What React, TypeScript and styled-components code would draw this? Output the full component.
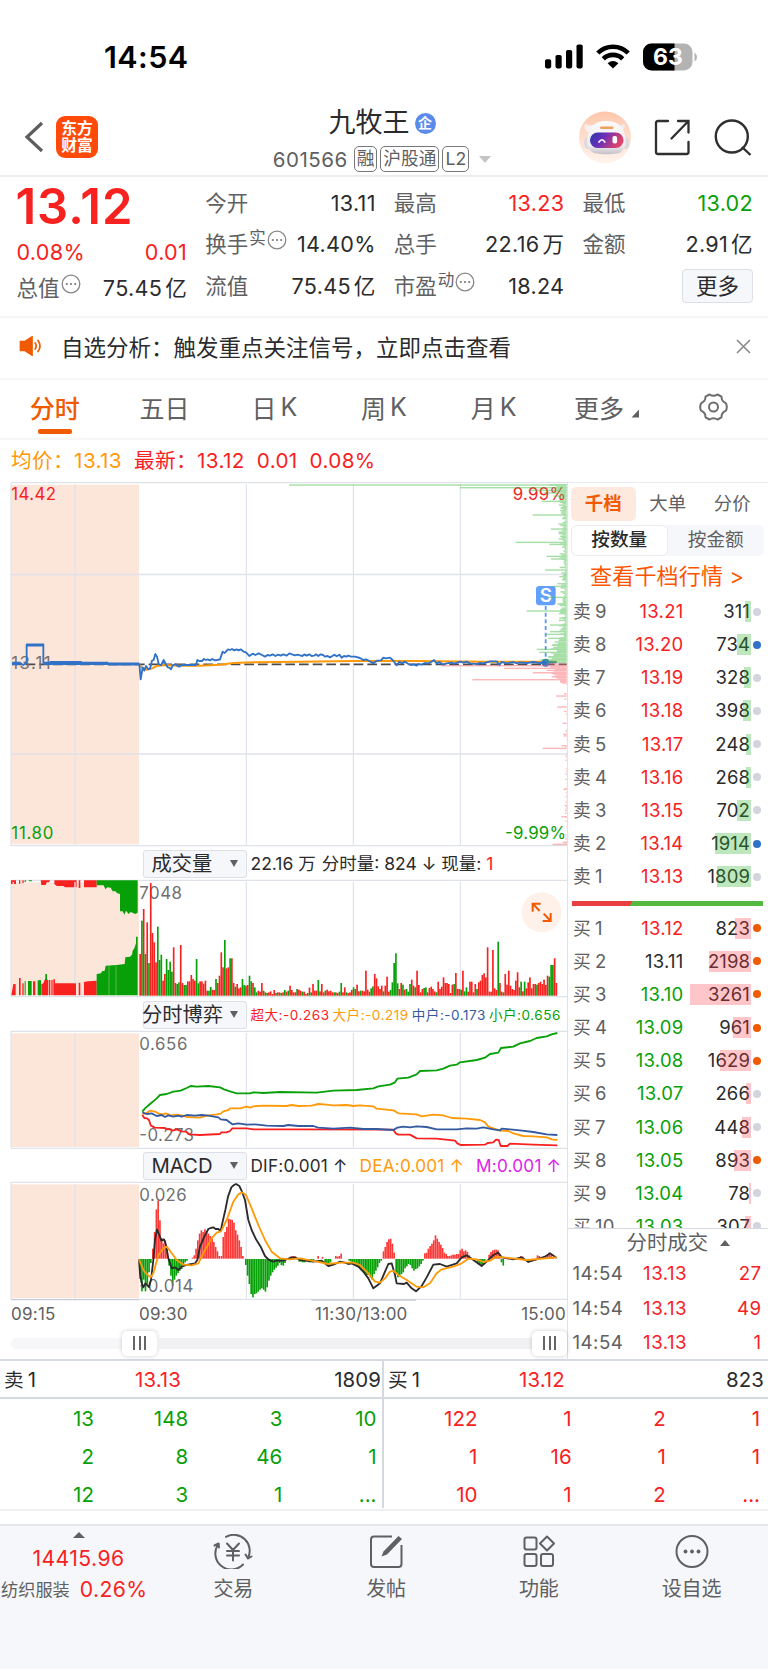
import React from 'react';
import styled, { createGlobalStyle } from 'styled-components';

const RED = '#f7221f';
const GREEN = '#08a008';
const INK = '#2b2b2d';
const GREY = '#606062';
const ORANGE = '#f05a00';
const AMBER = '#ff9a0a';
const LINE = '#dfe2e9';
const FONT = "Inter, 'Noto Sans CJK SC', sans-serif";

const GlobalStyle = createGlobalStyle`
  * { box-sizing: border-box; }
  body { margin: 0; background: #fff; font-family: ${FONT}; color: ${INK}; font-weight: 400; }
  svg { display: block; flex: none; }
  svg text { font-family: ${FONT}; }
`;

const Screen = styled.div`
  width: 768px;
  height: 1669px;
  display: flex;
  flex-direction: column;
  overflow: hidden;
  white-space: nowrap;
`;

/* ---------- status bar & header ---------- */

const StatusBar = styled.div`
  height: 106px;
  padding: 7px 71px 0 104px;
  display: flex;
  align-items: center;
  justify-content: space-between;
`;
const Clock = styled.div`
  font-size: 30.5px;
  font-weight: 600;
  color: #000;
  letter-spacing: 0.4px;
`;
const StatusIcons = styled.div`
  display: flex;
  align-items: center;
  gap: 13px;
`;
const Header = styled.header`
  height: 71px;
  border-bottom: 2px solid #ececec;
  display: grid;
  grid-template-columns: 248px 1fr 248px;
  padding: 0 16px 0 24px;
`;
const HeaderSide = styled.div<{ $end?: boolean }>`
  display: flex;
  align-items: center;
  justify-content: ${(p) => (p.$end ? 'flex-end' : 'flex-start')};
  gap: ${(p) => (p.$end ? '23px' : '12px')};
  margin-top: -8px;
`;
const Logo = styled.div`
  width: 42px;
  height: 42px;
  border-radius: 9px;
  background: #ff4a0a;
  color: #fff;
  font-size: 15.8px;
  line-height: 17px;
  font-weight: 600;
  padding-top: 4px;
  text-align: center;
  white-space: normal;
`;
const TitleBlock = styled.div`
  display: flex;
  flex-direction: column;
  align-items: center;
  margin-right: 12px;
`;
const Title = styled.div`
  height: 34px;
  display: flex;
  align-items: center;
  gap: 5px;
  font-size: 27px;
  line-height: 34px;
`;
const Enterprise = styled.span`
  width: 21px;
  height: 21px;
  border-radius: 50%;
  background: #5b8be8;
  color: #fff;
  font-size: 14px;
  font-weight: 700;
  line-height: 20px;
  text-align: center;
`;
const SubTitle = styled.div`
  display: flex;
  align-items: center;
  gap: 3px;
  height: 36px;
  padding-top: 2px;
  color: ${GREY};
`;
const Code = styled.span`
  margin-right: 3px;
  font-size: 20.5px;
  letter-spacing: 0.5px;
`;
const Tag = styled.span`
  height: 26px;
  border: 1.5px solid #77777a;
  border-radius: 5px;
  padding: 0 2px;
  font-size: 17.7px;
  line-height: 23px;
`;
const SubCaret = styled.span`
  display: flex;
  margin-left: 7px;
`;
const Caret = styled.span<{ $color: string; $up?: boolean; $w: number; $h: number }>`
  width: 0;
  height: 0;
  border-left: ${(p) => p.$w / 2}px solid transparent;
  border-right: ${(p) => p.$w / 2}px solid transparent;
  border-${(p) => (p.$up ? 'bottom' : 'top')}: ${(p) => p.$h}px solid ${(p) => p.$color};
`;

/* ---------- quote ---------- */

const Quote = styled.section`
  height: 141px;
  padding: 5px 15px 0 16.5px;
  border-bottom: 2px solid #f5f5f6;
  display: grid;
  grid-template-columns: repeat(4, 1fr);
  column-gap: 18px;
  align-items: start;
`;
const QuoteColumn = styled.div`
  display: flex;
  flex-direction: column;
`;
const Cell = styled.div<{ $h?: number }>`
  height: ${(p) => p.$h ?? 41.6}px;
  display: flex;
  align-items: center;
  justify-content: space-between;
`;
const BigPrice = styled.div`
  height: 49px;
  line-height: 49px;
  font-size: 49px;
  font-weight: 600;
  color: ${RED};
  letter-spacing: 0.9px;
  margin-left: -1px;
`;
const Label = styled.span`
  display: flex;
  align-items: center;
  font-size: 21.5px;
  line-height: 26px;
  color: ${GREY};
`;
const Sup = styled.span`
  font-size: 16.5px;
  margin: -12px 0 0 1px;
`;
const Value = styled.span<{ $color?: string }>`
  font-size: 21.6px;
  line-height: 26px;
  letter-spacing: 0.3px;
  color: ${(p) => p.$color ?? INK};
`;
const Unit = styled.span`
  margin-left: 3px;
`;
const InfoWrap = styled.span`
  margin: -8px 0 0 1px;
`;
const MoreButton = styled.button`
  margin-left: auto;
  width: 71px;
  height: 34px;
  border: 1.5px solid #dcdfe5;
  border-radius: 4px;
  background: #f6f7fa;
  font-family: inherit;
  font-size: 21.5px;
  line-height: 30px;
  padding: 0;
  color: ${INK};
`;

/* ---------- notice & tabs ---------- */

const Notice = styled.div`
  height: 61.5px;
  padding: 0 17px 3px 19px;
  border-bottom: 2px solid #f6f6f7;
  display: flex;
  align-items: center;
`;
const NoticeText = styled.div`
  flex: 1;
  margin-left: 18px;
  font-size: 22.5px;
`;
const TabBar = styled.nav`
  height: 60.5px;
  border-bottom: 2px solid #f6f6f7;
  display: grid;
  grid-template-columns: repeat(7, 1fr);
`;
const Tab = styled.div<{ $active?: boolean; $shift?: number }>`
  display: flex;
  align-items: center;
  justify-content: center;
  position: relative;
  padding-bottom: 3px;
  padding-left: ${(p) => p.$shift ?? 0}px;
  gap: 4px;
  font-size: 25px;
  font-weight: ${(p) => (p.$active ? 500 : 400)};
  color: ${(p) => (p.$active ? ORANGE : GREY)};
  &::after {
    content: '';
    display: ${(p) => (p.$active ? 'block' : 'none')};
    position: absolute;
    bottom: 4px;
    width: 34px;
    height: 5px;
    border-radius: 2px;
    background: ${ORANGE};
  }
`;
const Legend = styled.div`
  height: 42px;
  padding: 0 0 1px 11px;
  display: flex;
  align-items: center;
  font-size: 20.7px;
  line-height: 26px;
  letter-spacing: 0.35px;
  color: ${RED};
`;
const LegendItem = styled.span<{ $color?: string; $gap: number }>`
  color: ${(p) => p.$color ?? RED};
  margin-right: ${(p) => p.$gap}px;
`;

/* ---------- body ---------- */

const Body = styled.main`
  height: 879px;
  display: grid;
  grid-template-columns: 568px 200px;
  border-bottom: 2px solid #d5d9e0;
`;
const Charts = styled.div`
  display: flex;
  flex-direction: column;
  border-right: 1px solid ${LINE};
`;
const IndicatorHead = styled.div`
  height: 31px;
  padding-left: 142.5px;
  display: flex;
  align-items: center;
  line-height: 24px;
`;
const Picker = styled.div`
  width: 104px;
  height: 28px;
  flex: none;
  margin-right: 4px;
  border: 1.5px solid #dcdfe5;
  border-radius: 3px;
  background: #f6f7fa;
  display: flex;
  align-items: center;
  justify-content: space-between;
  padding-right: 8px;
  font-size: 20.3px;
  line-height: 24px;
`;
const PickerText = styled.span<{ $wide?: boolean }>`
  flex: 1;
  padding-left: ${(p) => (p.$wide ? 0 : '8px')};
  margin-left: ${(p) => (p.$wide ? '-1.5px' : 0)};
`;
const Stat = styled.span<{ $color?: string; $size?: number; $gap?: number; $track?: number }>`
  color: ${(p) => p.$color ?? INK};
  font-size: ${(p) => p.$size ?? 17.5}px;
  letter-spacing: ${(p) => p.$track ?? 0}px;
  margin-right: ${(p) => p.$gap ?? 0}px;
`;
const TimeAxis = styled.div`
  height: 25px;
  padding: 0 1px 0 11px;
  display: grid;
  grid-template-columns: 128px 176px 1fr auto;
  align-items: center;
  font-size: 17px;
  letter-spacing: 0.25px;
  color: ${GREY};
`;
const SliderRow = styled.div`
  height: 34px;
  display: flex;
  align-items: center;
  padding-left: 11px;
`;
const Track = styled.div<{ $grow?: boolean }>`
  height: 11px;
  width: ${(p) => (p.$grow ? 'auto' : '111px')};
  flex: ${(p) => (p.$grow ? 1 : 'none')};
  background: ${(p) => (p.$grow ? '#f1f1f3' : '#f7f7f9')};
  border-radius: ${(p) => (p.$grow ? 0 : '6px 0 0 6px')};
`;
const Handle = styled.div`
  width: 35px;
  height: 25px;
  border-radius: 5px;
  background: #fff;
  box-shadow: 0 0 4px rgba(0, 0, 0, 0.2);
  display: flex;
  align-items: center;
  justify-content: center;
  gap: 3.5px;
`;
const Grip = styled.i`
  width: 2px;
  height: 14px;
  background: #666;
`;

/* ---------- order book ---------- */

const Side = styled.aside`
  height: 877px;
  display: flex;
  flex-direction: column;
`;
const BookTabs = styled.div`
  height: 43px;
  padding: 4px 0 4px 3px;
  border-top: 1px solid #e8ebf0;
  display: flex;
`;
const BookTab = styled.div<{ $active?: boolean }>`
  width: 64.5px;
  height: 34px;
  line-height: 32px;
  border-radius: 5px;
  text-align: center;
  font-size: 18.4px;
  font-weight: ${(p) => (p.$active ? 600 : 400)};
  color: ${(p) => (p.$active ? ORANGE : GREY)};
  background: ${(p) => (p.$active ? '#fee9df' : 'transparent')};
`;
const Segment = styled.div`
  margin: 0 4px 0 3px;
  height: 31px;
  border-radius: 6px;
  background: #f6f7fa;
  display: flex;
`;
const SegmentItem = styled.div<{ $active?: boolean }>`
  flex: 1;
  border: 1.5px solid ${(p) => (p.$active ? '#ebecef' : 'transparent')};
  border-radius: 6px;
  background: ${(p) => (p.$active ? '#fff' : 'transparent')};
  text-align: center;
  line-height: 28px;
  font-size: 18.7px;
  font-weight: ${(p) => (p.$active ? 500 : 400)};
  color: ${(p) => (p.$active ? INK : GREY)};
`;
const BookLink = styled.div`
  height: 39px;
  line-height: 40px;
  padding-left: 22px;
  font-size: 22px;
  letter-spacing: 0.2px;
  color: #ff5500;
`;
const Levels = styled.div<{ $h: number }>`
  height: ${(p) => p.$h}px;
  overflow: hidden;
  display: flex;
  flex-direction: column;
`;
const Level = styled.div`
  height: 33.15px;
  flex: none;
  padding: 0 7px 0 5px;
  display: grid;
  grid-template-columns: 38px 72.5px 66.5px 1fr;
  align-items: center;
  font-size: 18.5px;
  line-height: 21px;
  letter-spacing: 0.25px;
  color: ${GREY};
`;
const SideName = styled.span`
  display: flex;
  align-items: baseline;
  gap: 4px;
`;
const SideGlyph = styled.span`
  font-size: 0.96em;
`;
const Price = styled.span<{ $color: string; $start?: boolean }>`
  text-align: ${(p) => (p.$start ? 'left' : 'right')};
  color: ${(p) => p.$color};
`;
const Volume = styled.span`
  text-align: right;
  position: relative;
  letter-spacing: 0.1px;
  color: ${INK};
`;
const DepthBar = styled.i<{ $color: string }>`
  position: absolute;
  right: -0.5px;
  top: 0;
  height: 21px;
  background: ${(p) => p.$color};
`;
const Dot = styled.i<{ $color: string }>`
  width: 8px;
  height: 8px;
  border-radius: 50%;
  justify-self: end;
  background: ${(p) => p.$color};
`;
const RatioBar = styled.div`
  margin: 7px 5px 6px 4px;
  height: 5px;
  background: linear-gradient(120deg, #e8403f 31%, #55b93f 31.5%);
`;
const TradesHead = styled.div`
  height: 28px;
  border-top: 1.5px solid #d5d9e0;
  display: flex;
  align-items: center;
  gap: 12px;
  padding-left: 58.5px;
  font-size: 20.4px;
  line-height: 26px;
  color: ${GREY};
`;
const Trade = styled.div`
  height: 34.3px;
  padding: 1px 6.5px 0 4.5px;
  display: grid;
  grid-template-columns: 52px 62.5px 1fr;
  align-items: center;
  font-size: 18.7px;
  letter-spacing: 0.45px;
  color: ${GREY};
`;

/* ---------- queue ---------- */

const Queue = styled.section`
  height: 150px;
  border-bottom: 2px solid #eeeff2;
  display: grid;
  grid-template-columns: 384px 384px;
`;
const QueueHalf = styled.div<{ $left?: boolean }>`
  height: 147px;
  border-right: ${(p) => (p.$left ? `2px solid #d5d9e0` : 'none')};
`;
const QueueHead = styled.div<{ $left?: boolean }>`
  height: 37.5px;
  border-bottom: 2px solid #d5d9e0;
  padding: ${(p) => (p.$left ? '3px 1px 0 4px' : '3px 4px 0 4px')};
  display: grid;
  grid-template-columns: 131px 1fr auto;
  align-items: center;
  font-size: 20.4px;
  line-height: 26px;
  letter-spacing: 0.1px;
`;
const QueueRow = styled.div<{ $left?: boolean }>`
  height: 37.7px;
  padding-top: 4px;
  padding-right: ${(p) => (p.$left ? '5.5px' : '8px')};
  display: grid;
  grid-template-columns: repeat(4, 94.2px);
  justify-content: end;
  align-items: center;
  text-align: right;
  font-size: 20.5px;
  line-height: 26px;
  color: ${(p) => (p.$left ? GREEN : RED)};
`;

/* ---------- footer ---------- */

const Spacer = styled.div`
  height: 13px;
`;
const Footer = styled.footer`
  flex: 1;
  background: #f6f7fa;
  border-top: 2px solid #e6e8ec;
  display: grid;
  grid-template-columns: 157px repeat(4, 1fr);
  align-items: start;
`;
const IndexBox = styled.div`
  display: flex;
  flex-direction: column;
  align-items: center;
  color: ${RED};
  font-size: 21.2px;
  letter-spacing: 0.4px;
  padding-top: 6px;
`;
const IndexLine = styled.div<{ $sector?: boolean }>`
  height: 31px;
  line-height: 31px;
  margin-top: ${(p) => (p.$sector ? 0 : '5px')};
  display: flex;
  align-items: center;
  gap: 10px;
  align-self: ${(p) => (p.$sector ? 'flex-start' : 'center')};
  padding-left: ${(p) => (p.$sector ? '1px' : 0)};
`;
const Sector = styled.span`
  font-size: 17.2px;
  letter-spacing: 0;
  color: ${GREY};
`;
const Action = styled.div`
  display: flex;
  flex-direction: column;
  align-items: center;
  padding-top: 8px;
  color: ${GREY};
  font-size: 20px;
`;
const ActionLabel = styled.div`
  height: 30px;
  line-height: 30px;
  margin-top: 5px;
`;

/* ---------- data ---------- */

// Minute volume bars: height followed by r / g for up / down.
const volumeBars = `125r 225g 260r 125g 220r 98g 338r 188r 160r 100r 207g 107g 123g 45r 65r 110g 77g 102g 72g 145r
38r 35g 40g 152r 38r 32g 32g 43r 43r 62r 50r 45r 110g 37g 43r 43r 36r 45r 15r 15g 26g 18r 17r 50g 38r 60r 130r 85r
167g 82r 85r 112g 112r 38r 27g 35r 22r 25r 50g 32g 30r 32r 60g 43g 38r 25g 10g 15r 12r 38r 15g 10r 8g 10r 13r 5r 17r
8g 10r 10r 8g 10r 17g 12r 15g 30r 17r 10r 10r 20g 18r 15r 12g 12r 5r 8g 24r 10g 35r 15r 15r 47g 13r 35r 10r 15g 18r
13r 15r 10r 10g 10r 8r 12g 38g 10r 25r 10g 8r 10r 17r 25g 20g 33r 13r 15g 15r 13r 75r 18r 12r 22g 28g 65r 52r 28r 20r
30r 13g 30r 57r 12r 17g 40g 98g 127g 37g 20r 38r 33g 18r 20g 12g 35g 48r 30r 25g 75r 32r 10r 20r 23g 25g 10r 23r 27r
20r 13r 10g 42r 20r 27r 55r 38r 38r 35r 8r 33r 35g 68r 20r 20r 18g 75r 13g 25g 12r 42r 42r 10r 35r 20g 40r 45r 62r 67r
55r 145r 12r 12r 137r 22r 17r 162g 38r 12r 10g 65r 33r 75r 30r 20r 17r 45r 70r 25r 42g 13r 42g 22r 40r 55r 22r 35r 35r
33g 38r 42r 35r 48r 32r 60r 57g 92g 92g 112r 38r`
  .split(/\s+/)
  .map((s) => ({ h: parseInt(s, 10), up: s.endsWith('r') }));
const BAR_STEP = 1254 / volumeBars.length;

// Each run is a start x followed by consecutive histogram heights.
const macdRuns: number[][] = [
  [418, -60, -97, -62, -97, -75, -40, -12],
  [456, 30, 80, 148, 175, 115, 62, 45, 55, 36],
  [505, -20, -50, -80, -62, -50, -42, -35, -30, -15, -10, -5],
  [575, 3, 10, 30, 55, 75, 85, 80, 88, 82, 75, 68, 60, 50, 35, 22, 8],
  [662, 8, 65, 80, 95, 120, 118, 116, 108, 85, 72, 55, 35, 8],
  [735, -18, -50, -75, -105, -115, -105, -103, -98, -92, -88, -92, -98, -85, -65, -50, -40, -32, -26, -20, -12, -18, -20, -12],
  [868, 6, 8, 8, 6],
  [895, -8, -8, -10, -10, -6, -8, -10, -9, -6],
  [952, 8], [965, 5], [973, -12, -18, -20, -10],
  [1005, 8, 6, 8, 15],
  [1045, -5, -8, -12, -15, -18, -22, -28, -34, -40, -45, -48, -48, -56, -62, -45, -35, -25, -12, -5],
  [1148, 22, 35, 50, 58, 60, 45, 18],
  [1186, -45, -55, -52, -45, -40, -28, -22, -15, -18, -28, -35, -30, -28, -22, -15, -5],
  [1272, 16, 18, 30, 38, 45, 55, 70, 60, 50, 42, 32, 18, 14],
  [1341, 8, 8, 10, 12, 12, 14, 14, 25, 30, 22, 25, 20, 10],
  [1430, -10, -18, -20, -15, -8],
  [1465, 12, 20, 25, 27, 27, 25, 12],
  [1502, -10, -20],
  [1560, 8, 6], [1582, -6, -8], [1610, 10, 8], [1635, 5, 12, 18, 12, 5],
];

// Resting orders by price: [y, length] for levels that stand out from the rest.
const askPeaks: [number, number][] = [
  [15, 833], [23, 320], [31, 110], [39, 70], [48, 40], [64, 75], [85, 18], [105, 102], [147, 47], [187, 153], [193, 52], [229, 60],
  [237, 47], [270, 65], [290, 22], [311, 28], [319, 42], [352, 60], [372, 28], [393, 120], [414, 22], [435, 50], [455, 50],
  [463, 62], [475, 55], [496, 45], [508, 90], [517, 82], [530, 55], [540, 80],
];
const bidPeaks: [number, number][] = [
  [557, 375], [565, 188], [571, 60], [578, 102], [584, 30], [590, 45], [599, 283], [606, 20], [648, 32], [681, 28], [730, 12],
  [763, 10], [797, 15], [805, 72], [928, 10], [976, 6], [1010, 16], [1093, 42], [1087, 12],
];
const noise = (n: number) => {
  const v = Math.sin(n * 12.9898) * 43758.5453;
  return v - Math.floor(v);
};

const priceLine = `418,552 422,598 428,562 433,572 438,558 445,568 450,566 456,542 461,540 466,522 471,530 476,552 483,556
491,540 497,552 503,562 508,563 513,568 518,556 523,554 527,552 530,556 538,560 545,555 588,555 592,540 598,543 606,543
612,537 618,540 623,538 630,541 637,537 645,541 652,540 660,538 668,515 674,519 684,508 690,510 696,507 703,511 710,508
716,511 722,508 731,515 738,517 748,528 758,521 766,525 776,520 786,525 795,530 802,525 810,527 818,523 826,528 834,524
842,527 850,523 860,527 868,520 876,523 885,526 893,524 900,526`;
const priceLineLate = `60,526 67,528 73,523 80,527 88,523 95,528 102,527 108,523 115,528 122,523 129,525 135,530 143,528 150,532
157,528 163,524 170,529 178,524 185,533 192,528 199,530 205,527 213,530 225,530 240,534 250,540 258,538 268,543 280,550
290,542 303,541 310,533 318,535 330,533 338,540 350,556 358,545 366,550 375,545 385,552 393,555 400,553 410,557 416,552 425,554
435,549 445,550 453,546 462,540 470,550 478,546 490,554 500,550 515,548 522,551 540,545 550,548 560,545 570,550 590,552 600,549
610,550 630,544 650,544 658,556 665,546 680,550 700,546 710,550 720,547 740,549 760,546 780,549 800,546 830,547`;

interface LevelData { n: string; p: string; v: number; dot?: boolean }
const asks: LevelData[] = [
  { n: '9', p: '13.21', v: 311 }, { n: '8', p: '13.20', v: 734, dot: true }, { n: '7', p: '13.19', v: 328 },
  { n: '6', p: '13.18', v: 398 }, { n: '5', p: '13.17', v: 248 }, { n: '4', p: '13.16', v: 268 },
  { n: '3', p: '13.15', v: 702 }, { n: '2', p: '13.14', v: 1914, dot: true }, { n: '1', p: '13.13', v: 1809 },
];
const bids: LevelData[] = [
  { n: '1', p: '13.12', v: 823, dot: true }, { n: '2', p: '13.11', v: 2198, dot: true }, { n: '3', p: '13.10', v: 3261, dot: true },
  { n: '4', p: '13.09', v: 961, dot: true }, { n: '5', p: '13.08', v: 1629, dot: true }, { n: '6', p: '13.07', v: 266 },
  { n: '7', p: '13.06', v: 448 }, { n: '8', p: '13.05', v: 893, dot: true }, { n: '9', p: '13.04', v: 78 },
  { n: '10', p: '13.03', v: 307 },
];
const priceColor = (p: string) => (Number(p) > 13.11 ? RED : Number(p) < 13.11 ? GREEN : INK);

/* ---------- icons ---------- */

const SignalIcon = () => (
  <svg width="38" height="25" viewBox="0 0 38 25">
    <rect x="0" y="15.2" width="6.2" height="9.2" rx="1.8" />
    <rect x="10.5" y="11" width="6.2" height="13.4" rx="1.8" />
    <rect x="21" y="6" width="6.2" height="18.4" rx="1.8" />
    <rect x="31.5" y="0.5" width="6.2" height="23.9" rx="1.8" />
  </svg>
);
const WifiIcon = () => (
  <svg width="34" height="25" viewBox="0 0 34 25" fill="none" stroke="#000" strokeWidth="4.6">
    <path d="M1.800 9 C10 .6 24 .6 32.200 9" />
    <path d="M7.300 14.800 C12.500 9.600 21.500 9.600 26.700 14.800" />
    <path d="M17 24.500 L11.600 19.200 Q17 14.600 22.400 19.200 Z" fill="#000" stroke="none" />
  </svg>
);
const BatteryIcon = () => (
  <svg width="54" height="28" viewBox="0 0 54 28">
    <defs>
      <clipPath id="battery"><rect x="0" y="0.5" width="49.5" height="27" rx="8.5" /></clipPath>
    </defs>
    <g clipPath="url(#battery)">
      <rect width="50" height="28" fill="#b3b3b3" />
      <rect width="31.500" height="28" fill="#000" />
    </g>
    <path d="M51.500 9.500 Q54 11 54 14 T51.500 18.500Z" fill="#b3b3b3" />
    <text x="25" y="22.200" fontSize="23" fontWeight="700" fill="#fff" textAnchor="middle">63</text>
  </svg>
);
const BackIcon = () => (
  <svg width="20" height="32" viewBox="0 0 20 32" fill="none" stroke="#5d5d60" strokeWidth="3.2">
    <path d="M18 2 L3 16 L18 30" />
  </svg>
);
const RobotIcon = () => (
  <svg width="52" height="53" viewBox="0 0 52 53">
    <defs>
      <linearGradient id="halo" x1="0" y1="0" x2="0" y2="1">
        <stop offset="0" stopColor="#fdc6ab" /><stop offset="1" stopColor="#fff5ef" />
      </linearGradient>
      <linearGradient id="visor" x1="0" y1="0" x2="1" y2="0.3">
        <stop offset="0" stopColor="#2a3aa8" /><stop offset="0.45" stopColor="#6a2fb8" /><stop offset="1" stopColor="#e0446a" />
      </linearGradient>
      <linearGradient id="shell" x1="0" y1="0" x2="0" y2="1">
        <stop offset="0" stopColor="#fbfafb" /><stop offset="0.75" stopColor="#eeebef" /><stop offset="1" stopColor="#c3c0c8" />
      </linearGradient>
    </defs>
    <circle cx="26" cy="26.500" r="26" fill="url(#halo)" />
    <path d="M9 22 Q3.500 17 6.500 12.500 Q10 16 16 13Z" fill="#f6f0f1" />
    <path d="M42 22 Q47.500 17 45 12.500 Q41 16 36 13Z" fill="#f3ecee" />
    <ellipse cx="8.500" cy="32" rx="3.500" ry="6" fill="#dcd8de" />
    <ellipse cx="47" cy="32" rx="3.500" ry="6" fill="#dcd8de" />
    <path d="M27 10 C39 10 43 15 46 24 C49 34 44 42 38 42.500 C32 43.500 23 43.500 17 42.500 C10 41 6 34 9 24 C12 15 16 10 27 10Z" fill="url(#shell)" />
    <rect x="21" y="15.500" width="13.500" height="2.400" rx="1.200" fill="#f0a05a" />
    <rect x="11" y="21.500" width="33.500" height="15.500" rx="7.700" fill="url(#visor)" />
    <path d="M20 31 Q23 26.500 25.800 31" stroke="#fff" strokeWidth="1.700" fill="none" strokeLinecap="round" />
    <rect x="33.500" y="25" width="4.600" height="7.600" rx="1.800" fill="#fff" />
  </svg>
);
const ShareIcon = () => (
  <svg width="37" height="37" viewBox="0 0 37 37" fill="none" stroke="#2f2f31" strokeWidth="2.300" strokeLinecap="round">
    <path d="M14 2 H4 Q2 2 2 4 V33 Q2 35 4 35 H32.500 Q34.500 35 34.500 33 V23" />
    <path d="M24 2 H34.500 V13.500 M34 2.500 L17.500 19.500" />
  </svg>
);
const SearchIcon = () => (
  <svg width="38" height="38" viewBox="0 0 38 38" fill="none" stroke="#2f2f31" strokeWidth="2.400">
    <circle cx="17.800" cy="18.500" r="16" />
    <path d="M28 29 L36.500 37" />
  </svg>
);
const InfoIcon = () => (
  <InfoWrap>
    <svg width="20" height="20" viewBox="0 0 20 20">
      <circle cx="10" cy="10" r="8.800" fill="none" stroke="#88888b" strokeWidth="1.300" />
      <circle cx="5.800" cy="10" r="1.100" fill="#777" /><circle cx="10" cy="10" r="1.100" fill="#777" /><circle cx="14.200" cy="10" r="1.100" fill="#777" />
    </svg>
  </InfoWrap>
);
const SpeakerIcon = () => (
  <svg width="24" height="20" viewBox="0 0 24 20" fill="none" stroke={ORANGE} strokeWidth="1.700" strokeLinecap="round">
    <path d="M1.500 5.500 H6 L13 1 V19 L6 14.500 H1.500Z" fill={ORANGE} />
    <path d="M16.200 7 Q18.200 10 16.200 13 M19 4.500 Q23 10 19 15.500" />
  </svg>
);
const CloseIcon = () => (
  <svg width="15" height="15" viewBox="0 0 15 15" stroke="#88888b" strokeWidth="1.600">
    <path d="M1 1 L14 14 M14 1 L1 14" />
  </svg>
);
const GearIcon = () => (
  <svg width="29" height="28" viewBox="0 0 29 28" fill="none" stroke="#6d6d70" strokeWidth="2">
    <path d="M10.500 1.500 Q14.500 4.200 18.500 1.500 L22.500 3.700 Q22.300 8.300 27 10.300 Q28.600 14 27 17.700 Q22.300 19.700 22.500 24.300 L18.500 26.500 Q14.500 23.800 10.500 26.500 L6.500 24.300 Q6.700 19.700 2 17.700 Q.4 14 2 10.300 Q6.700 8.300 6.500 3.700Z" strokeLinejoin="round" />
    <circle cx="14.500" cy="14" r="4.500" />
  </svg>
);
const TradeIcon = () => (
  <svg width="40" height="35" viewBox="0 0 40 35" fill="none" stroke="#606062" strokeWidth="2" strokeLinecap="round">
    <path d="M13 2.800 A16 16 0 0 1 35 24 M30 30.500 A16 16 0 0 1 5.500 10" />
    <path d="M35 24.500 L32.500 20.500 M35 24.500 L38.500 22.500 M5.500 9.500 L1.500 11.500 M5.500 9.500 L6 13.500" />
    <path d="M14 9.500 L20 16 L26 9.500 M20 16 V26.500 M14 17 H26 M14 21.500 H26" />
  </svg>
);
const PostIcon = () => (
  <svg width="34" height="35" viewBox="0 0 34 35" fill="none" stroke="#606062" strokeWidth="2">
    <path d="M23 2.500 H5 Q2 2.500 2 5.500 V30 Q2 33 5 33 H29.500 Q32.500 33 32.500 30 V11" />
    <path d="M12.500 22.500 L14.500 17.500 L29.500 2 L33 5 L18 20.500 Z" fill="#606062" stroke="none" />
  </svg>
);
const GridIcon = () => (
  <svg width="32" height="35" viewBox="0 0 32 35" fill="none" stroke="#606062" strokeWidth="2">
    <rect x="1.500" y="3.500" width="12" height="12" rx="2" />
    <rect x="1.500" y="20" width="12" height="12" rx="2" />
    <rect x="18" y="20" width="12" height="12" rx="2" />
    <path d="M24 2.500 L31 9.500 L24 16.500 L17 9.500Z" strokeLinejoin="round" />
  </svg>
);
const DotsIcon = () => (
  <svg width="34" height="35" viewBox="0 0 34 35" fill="none" stroke="#606062" strokeWidth="2">
    <circle cx="17" cy="17.500" r="15.500" />
    <g fill="#606062" stroke="none"><circle cx="10.500" cy="17.500" r="1.900" /><circle cx="17" cy="17.500" r="1.900" /><circle cx="23.500" cy="17.500" r="1.900" /></g>
  </svg>
);

/* ---------- charts (drawn at three units per pixel) ---------- */

const Frame = ({ top, bottom }: { top: number; bottom: number }) => (
  <>
    <rect x="33" y={top + 6} width="384" height={bottom - top - 10} fill="#fce6da" />
    <g stroke={LINE} strokeWidth="3.500">
      <path d={`M33 ${top} H1702 M33 ${bottom} H1702`} />
      <path d={`M33 ${top} V${bottom} M225 ${top + 5} V${bottom - 3} M739 ${top + 5} V${bottom - 3} M1060 ${top + 5} V${bottom - 3} M1381 ${top + 5} V${bottom - 3}`} />
    </g>
  </>
);

const PriceChart = () => (
  <svg width="567" height="366" viewBox="0 6 1701 1098">
    <Frame top={8} bottom={1097} />
    <path d="M33 283.500 H1702 M33 822 H1702" stroke={LINE} strokeWidth="4" />
    <path d="M36 553 H1700" stroke="#4c4c4c" strokeWidth="5.500" strokeDasharray="29 12" />
    <g fontSize="50.500">
      <text x="34" y="60" fill={RED} textLength="134">14.42</text>
      <text x="34" y="568" fill="#77706c" textLength="118">13.11</text>
      <text x="34" y="1077" fill={GREEN} textLength="126">11.80</text>
      <text x="1538" y="60" fill={RED} textLength="160">9.99%</text>
      <text x="1515" y="1077" fill={GREEN} textLength="183">-9.99%</text>
    </g>
    <polyline points="418,556 425,562 440,569 455,566 470,558 490,555 540,557 600,557 660,554 700,549 760,547 900,545 1060,543 1240,543 1460,545 1670,545" fill="none" stroke={AMBER} strokeWidth="6" />
    <g fill="none" stroke="#2f72c8">
      <path d="M36 550 H62 L70 555 L80 548 V495 H130 V550" strokeWidth="5.500" />
      <path d="M79 495 H132 M36 550 H62 M130 550 H325 M150 548 H245 M325 552 H418" strokeWidth="9.500" />
      <polyline points={priceLine} strokeWidth="5.500" strokeLinejoin="round" />
      <polyline points={priceLineLate} transform="translate(840 0)" strokeWidth="5.500" strokeLinejoin="round" />
    </g>
    <path d="M1637 378 V540" stroke="#5b9bf5" strokeWidth="5.500" strokeDasharray="12 8" />
    <circle cx="1637" cy="548" r="12" fill="#2f72c8" />
    <rect x="1608" y="318" width="59" height="58" rx="10" fill="#62a0fb" />
    <text x="1637.500" y="367" fontSize="56" fontWeight="600" fill="#fff" textAnchor="middle">S</text>
    <g opacity="0.5">
      {Array.from({ length: 132 }, (_, i) => {
        const y = 12 + i * 4.07;
        const len = 3 + noise(i + 1) * 22 + Math.max(0, y - 455) * 0.45 + Math.max(0, 50 - y) * 0.8;
        return <rect key={i} x={1700 - len} y={y} width={len} height="4.300" fill="#50c050" />;
      })}
      {askPeaks.map(([y, len]) => <rect key={y} x={1700 - len} y={y - 2} width={len} height="4.200" fill="#50c050" />)}
      {Array.from({ length: 134 }, (_, i) => {
        const y = 550 + i * 4.07;
        const near = Math.max(0, 610 - y);
        const len = near > 0 ? 12 + near * 0.7 * noise(i + 3) + near * 0.4 : noise(i + 40) > 0.55 ? noise(i + 9) * (y < 810 ? 11 : 5) : 0;
        return <rect key={i} x={1700 - len} y={y} width={len} height="4" fill="#fb7078" />;
      })}
      {bidPeaks.map(([y, len]) => <rect key={y} x={1700 - len} y={y - 2} width={len} height="4.200" fill="#fb7078" />)}
    </g>
  </svg>
);

const VolumeChart = () => (
  <svg width="567" height="120" viewBox="0 117 1701 360">
    <Frame top={121} bottom={470} />
    <g fill={RED}>
      <path d="M33 121 H48 V132 H42 V126 H38 V132 H33Z M57 121 h4 v10 h-4z M67 121 h4 v8 h-4z M122 121 H290 V142 H252 V121 H241 V144 H236 V121 H230 V142 H195 L190 138 H170 L163 132 V121 H150 L148 127 H140 L137 135 H124Z" />
      <path d="M34 466 L40 432 H47 V466Z M57 414 h5 V466 h-5z M67 430 h4 V466 h-4z M99 424 h7 V466 h-7z M124 433 L130 430 L136 415 L144 420 V466 H124Z M146 420 h5 V466 h-5z M154 420 h4 V466 h-4z M160 418 h5 V430 H228 V466 H160Z M236 428 h5 V466 h-5z M252 426 L264 424 L290 422 V466 H252Z" />
    </g>
    <g fill={GREEN}>
      <path d="M74 121 h4 v5 h-4z M86 121 h10 v3 h-10z M290 121 H413 V218 L406 222 L392 216 L386 222 L378 212 L373 224 L368 214 H360 V162 L352 160 L346 154 H338 L332 143 L322 142 L316 148 L311 136 H290Z" />
      <path d="M74 424 h3 V466 h-3z M84 423 h11 V466 h-11z M113 421 h10 V466 h-10z M136 402 h5 V420 h-5z M290 466 V402 L303 400 L306 394 L314 392 L317 377 L350 375 L374 372 L376 352 L390 350 L396 344 L398 332 L403 325 L408 310 V290 H413 V466Z" />
    </g>
    <path d="M53 430 V466 M110 424 V466 M327 377 V466 M348 377 V466" stroke="#fce6da" strokeOpacity=".5" strokeWidth="2" />
    <path d="M225 126 V430" stroke={LINE} strokeWidth="4" />
    <text x="418" y="177" fontSize="50.500" fill="#707072" textLength="128">7048</text>
    {volumeBars.map((b, i) => (
      <rect key={i} x={418 + i * BAR_STEP} y={467 - b.h} width={BAR_STEP - 0.3} height={b.h} fill={b.up ? RED : GREEN} />
    ))}
    <circle cx="1625" cy="217" r="60" fill="#fef1ea" />
    <path d="M1619 213 L1598 191 M1598 215 V191 H1622 M1631 221 L1652 243 M1652 219 V243 H1628" fill="none" stroke={ORANGE} strokeWidth="6" />
  </svg>
);

const GameChart = () => (
  <svg width="567" height="120" viewBox="0 570 1701 360">
    <Frame top={574} bottom={925} />
    <g fontSize="50.500" fill="#707072">
      <text x="418" y="630" textLength="144">0.656</text>
      <text x="418" y="903" textLength="164">-0.273</text>
    </g>
    <g fill="none" strokeWidth="5.500" strokeLinejoin="round">
      <polyline stroke={RED} points="427,825 433,834 441,835 447,840 452,856 464,863 495,864 500,868 512,868 518,872 530,868 545,874 558,875 568,883 600,885 660,882 664,877 680,877 690,873 697,865 740,865 760,868 860,868 1180,869 1187,880 1195,884 1230,884 1250,895 1310,896 1365,902 1372,910 1382,915 1455,914 1463,909 1480,907 1488,899 1496,900 1502,918 1522,918 1530,911 1600,914 1672,916" />
      <polyline stroke={AMBER} points="427,822 438,820 450,812 465,815 480,822 490,823 497,820 512,826 530,824 545,826 560,831 580,832 600,833 620,827 650,823 662,821 670,814 685,810 690,805 720,805 740,800 750,803 760,799 790,797 860,798 875,795 895,798 935,797 955,792 980,794 1000,796 1040,795 1060,798 1080,796 1120,799 1130,806 1180,811 1195,820 1250,823 1265,829 1300,824 1330,826 1355,834 1400,836 1440,840 1455,847 1465,860 1500,872 1525,873 1540,880 1570,888 1600,889 1640,892 1655,898 1672,900" />
      <polyline stroke="#335a9f" points="427,817 440,822 455,820 470,828 485,825 495,831 505,826 520,830 535,827 545,830 560,825 585,827 605,825 625,827 655,832 662,838 680,840 697,853 715,850 740,854 765,853 800,857 850,858 865,855 895,858 940,858 955,863 1000,866 1050,863 1090,867 1130,867 1180,870 1192,863 1210,860 1230,862 1250,859 1280,861 1310,868 1370,868 1400,865 1430,866 1450,862 1480,868 1500,871 1505,866 1530,868 1560,871 1600,876 1640,883 1672,885" />
      <polyline stroke={GREEN} points="427,815 435,805 450,792 460,784 470,775 480,765 500,762 520,755 542,752 560,744 572,738 590,740 625,738 660,742 672,748 690,754 710,760 750,760 760,757 790,759 840,756 950,758 1000,752 1070,750 1120,745 1135,739 1170,734 1185,727 1192,716 1225,713 1250,703 1260,693 1310,691 1330,686 1350,677 1370,674 1380,667 1430,660 1455,653 1470,642 1495,638 1503,624 1540,620 1560,610 1590,603 1610,594 1640,589 1655,583 1672,579" />
    </g>
  </svg>
);

const MacdChart = () => (
  <svg width="567" height="120" viewBox="0 93 1701 360">
    <Frame top={97} bottom={448} />
    <path d="M33 449 H417 M934 450 H1248" stroke="#c9ccd2" strokeWidth="4" />
    {macdRuns.flatMap(([x, ...hs]) =>
      hs.map((h, i) => (
        <rect key={`${x}-${i}`} x={x + i * 5.34} y={h > 0 ? 326 - h : 327} width={5} height={Math.abs(h)} fill={h > 0 ? '#fb3a38' : GREEN} />
      )),
    )}
    <g fontSize="50.500" fill="#707072">
      <text x="418" y="154" textLength="142">0.026</text>
      <text x="418" y="426" textLength="162">-0.014</text>
    </g>
    <g fill="none" strokeWidth="5.500" strokeLinejoin="round">
      <polyline stroke={INK} points="417,328 420,370 424,395 430,412 436,400 440,404 447,411 453,390 460,330 465,270 471,238 478,255 484,272 492,268 498,285 505,325 515,355 525,352 535,360 545,350 560,345 585,340 592,330 600,290 612,262 625,237 632,234 640,232 647,237 655,237 662,243 668,215 676,180 684,140 694,112 702,105 708,102 718,108 726,125 735,150 745,210 755,240 768,268 782,290 795,318 805,328 818,335 830,332 850,332 870,324 885,322 900,330 940,335 965,332 985,348 1005,342 1020,335 1035,338 1045,342 1055,340 1075,350 1090,365 1105,385 1120,415 1140,400 1155,365 1165,342 1175,340 1185,375 1190,400 1212,402 1220,398 1235,415 1248,424 1265,408 1280,382 1300,344 1320,342 1340,350 1370,340 1385,322 1400,316 1415,326 1445,348 1460,335 1480,315 1495,308 1505,322 1540,328 1565,322 1585,336 1610,328 1635,320 1650,310 1670,324" />
      <polyline stroke={AMBER} points="417,328 430,360 440,372 452,382 460,370 475,315 490,295 500,290 512,305 530,330 550,344 575,346 595,340 615,300 635,265 650,248 663,244 680,210 700,155 715,133 726,127 738,135 755,175 775,225 795,270 815,305 840,325 868,328 900,325 950,335 985,342 1020,338 1060,338 1080,345 1105,370 1125,395 1140,398 1155,385 1170,365 1180,362 1195,375 1220,390 1250,410 1270,412 1290,400 1310,370 1325,358 1360,350 1385,340 1405,326 1430,328 1450,336 1470,332 1490,320 1510,322 1580,330 1670,322" />
    </g>
  </svg>
);

/* ---------- pieces ---------- */

const BookLevel = ({ name, d, bar, dot }: { name: string; d: LevelData; bar: string; dot: string }) => (
  <Level>
    <SideName><SideGlyph>{name}</SideGlyph><span>{d.n}</span></SideName>
    <Price $color={priceColor(d.p)}>{d.p}</Price>
    <Volume>
      {d.v}
      <DepthBar $color={bar} style={{ width: Math.max(1, d.v * 0.0187) }} />
    </Volume>
    <Dot $color={d.dot ? dot : '#d2d5dd'} />
  </Level>
);

const GripHandle = () => <Handle><Grip /><Grip /><Grip /></Handle>;

const sellQueue = [['13', '148', '3', '10'], ['2', '8', '46', '1'], ['12', '3', '1', '...']];
const buyQueue = [['122', '1', '2', '1'], ['1', '16', '1', '1'], ['10', '1', '2', '...']];

export default function App() {
  return (
    <>
      <GlobalStyle />
      <Screen>
        <StatusBar>
          <Clock>14:54</Clock>
          <StatusIcons><SignalIcon /><WifiIcon /><BatteryIcon /></StatusIcons>
        </StatusBar>

        <Header>
          <HeaderSide><BackIcon /><Logo>东方<br />财富</Logo></HeaderSide>
          <TitleBlock>
            <Title>九牧王<Enterprise>企</Enterprise></Title>
            <SubTitle>
              <Code>601566</Code><Tag>融</Tag><Tag>沪股通</Tag><Tag>L2</Tag>
              <SubCaret><Caret $color="#c4c4c6" $w={12} $h={7} /></SubCaret>
            </SubTitle>
          </TitleBlock>
          <HeaderSide $end><RobotIcon /><ShareIcon /><SearchIcon /></HeaderSide>
        </Header>

        <Quote>
          <QuoteColumn>
            <BigPrice>13.12</BigPrice>
            <Cell><Value $color={RED}>0.08%</Value><Value $color={RED}>0.01</Value></Cell>
            <Cell $h={30}><Label>总值<InfoIcon /></Label><Value>75.45<Unit>亿</Unit></Value></Cell>
          </QuoteColumn>
          <QuoteColumn>
            <Cell><Label>今开</Label><Value>13.11</Value></Cell>
            <Cell><Label>换手<Sup>实</Sup><InfoIcon /></Label><Value>14.40%</Value></Cell>
            <Cell><Label>流值</Label><Value>75.45<Unit>亿</Unit></Value></Cell>
          </QuoteColumn>
          <QuoteColumn>
            <Cell><Label>最高</Label><Value $color={RED}>13.23</Value></Cell>
            <Cell><Label>总手</Label><Value>22.16<Unit>万</Unit></Value></Cell>
            <Cell><Label>市盈<Sup>动</Sup><InfoIcon /></Label><Value>18.24</Value></Cell>
          </QuoteColumn>
          <QuoteColumn>
            <Cell><Label>最低</Label><Value $color={GREEN}>13.02</Value></Cell>
            <Cell><Label>金额</Label><Value>2.91<Unit>亿</Unit></Value></Cell>
            <Cell><MoreButton>更多</MoreButton></Cell>
          </QuoteColumn>
        </Quote>

        <Notice>
          <SpeakerIcon />
          <NoticeText>自选分析：触发重点关注信号，立即点击查看</NoticeText>
          <CloseIcon />
        </Notice>

        <TabBar>
          <Tab $active>分时</Tab>
          <Tab>五日</Tab>
          <Tab>日<span>K</span></Tab>
          <Tab>周<span>K</span></Tab>
          <Tab>月<span>K</span></Tab>
          <Tab $shift={9}>
            更多
            <svg width="14" height="24" viewBox="0 0 14 24"><path d="M11 14.500 V22.500 H3.500Z" fill={GREY} /></svg>
          </Tab>
          <Tab><GearIcon /></Tab>
        </TabBar>

        <Legend>
          <LegendItem $color={AMBER} $gap={12}>均价：13.13</LegendItem>
          <LegendItem $gap={12}>最新：13.12</LegendItem>
          <LegendItem $gap={12}>0.01</LegendItem>
          <LegendItem $gap={0}>0.08%</LegendItem>
        </Legend>

        <Body>
          <Charts>
            <PriceChart />
            <IndicatorHead>
              <Picker><PickerText>成交量</PickerText><Caret $color={GREY} $w={8} $h={7} /></Picker>
              <Stat $gap={6}>22.16 万</Stat>
              <Stat $gap={5}>分时量: 824 ↓</Stat>
              <Stat>现量: </Stat><Stat $color={RED}>&nbsp;1</Stat>
            </IndicatorHead>
            <VolumeChart />
            <IndicatorHead>
              <Picker><PickerText $wide>分时博弈</PickerText><Caret $color={GREY} $w={8} $h={7} /></Picker>
              <Stat $color={RED} $size={13.5} $gap={3} $track={0.55}>超大:-0.263</Stat>
              <Stat $color={AMBER} $size={13.5} $gap={3} $track={0.55}>大户:-0.219</Stat>
              <Stat $color="#335a9f" $size={13.5} $gap={3} $track={0.55}>中户:-0.173</Stat>
              <Stat $color={GREEN} $size={13.5} $track={0.55}>小户:0.656</Stat>
            </IndicatorHead>
            <GameChart />
            <IndicatorHead>
              <Picker><PickerText>MACD</PickerText><Caret $color={GREY} $w={8} $h={7} /></Picker>
              <Stat $size={17.2} $gap={12} $track={0.2}>DIF:0.001 ↑</Stat>
              <Stat $size={17.2} $color={AMBER} $gap={12} $track={0.2}>DEA:0.001 ↑</Stat>
              <Stat $size={17.2} $color="#dd22e8" $track={0.2}>M:0.001 ↑</Stat>
            </IndicatorHead>
            <MacdChart />
            <TimeAxis><span>09:15</span><span>09:30</span><span>11:30/13:00</span><span>15:00</span></TimeAxis>
            <SliderRow><Track /><GripHandle /><Track $grow /><GripHandle /></SliderRow>
          </Charts>

          <Side>
            <BookTabs><BookTab $active>千档</BookTab><BookTab>大单</BookTab><BookTab>分价</BookTab></BookTabs>
            <Segment><SegmentItem $active>按数量</SegmentItem><SegmentItem>按金额</SegmentItem></Segment>
            <BookLink>查看千档行情 &gt;</BookLink>
            <Levels $h={299}>
              {asks.map((d) => <BookLevel key={d.n} name="卖" d={d} bar="rgba(40,176,40,0.3)" dot="#2f72c8" />)}
            </Levels>
            <RatioBar />
            <Levels $h={317}>
              {bids.map((d) => <BookLevel key={d.n} name="买" d={d} bar="rgba(250,60,70,0.29)" dot={ORANGE} />)}
            </Levels>
            <TradesHead>分时成交<Caret $up $color={GREY} $w={10} $h={6} /></TradesHead>
            {['27', '49', '1'].map((q) => (
              <Trade key={q}><span>14:54</span><Price $color={RED}>13.13</Price><Price $color={RED}>{q}</Price></Trade>
            ))}
          </Side>
        </Body>

        <Queue>
          <QueueHalf $left>
            <QueueHead $left><SideName><SideGlyph>卖</SideGlyph>1</SideName><Price $start $color={RED}>13.13</Price><span>1809</span></QueueHead>
            {sellQueue.map((r, i) => <QueueRow $left key={i}>{r.map((v, j) => <span key={j}>{v}</span>)}</QueueRow>)}
          </QueueHalf>
          <QueueHalf>
            <QueueHead><SideName><SideGlyph>买</SideGlyph>1</SideName><Price $start $color={RED}>13.12</Price><span>823</span></QueueHead>
            {buyQueue.map((r, i) => <QueueRow key={i}>{r.map((v, j) => <span key={j}>{v}</span>)}</QueueRow>)}
          </QueueHalf>
        </Queue>
        <Spacer />

        <Footer>
          <IndexBox>
            <Caret $up $color={GREY} $w={12} $h={6} />
            <IndexLine>14415.96</IndexLine>
            <IndexLine $sector><Sector>纺织服装</Sector>0.26%</IndexLine>
          </IndexBox>
          <Action><TradeIcon /><ActionLabel>交易</ActionLabel></Action>
          <Action><PostIcon /><ActionLabel>发帖</ActionLabel></Action>
          <Action><GridIcon /><ActionLabel>功能</ActionLabel></Action>
          <Action><DotsIcon /><ActionLabel>设自选</ActionLabel></Action>
        </Footer>
      </Screen>
    </>
  );
}
